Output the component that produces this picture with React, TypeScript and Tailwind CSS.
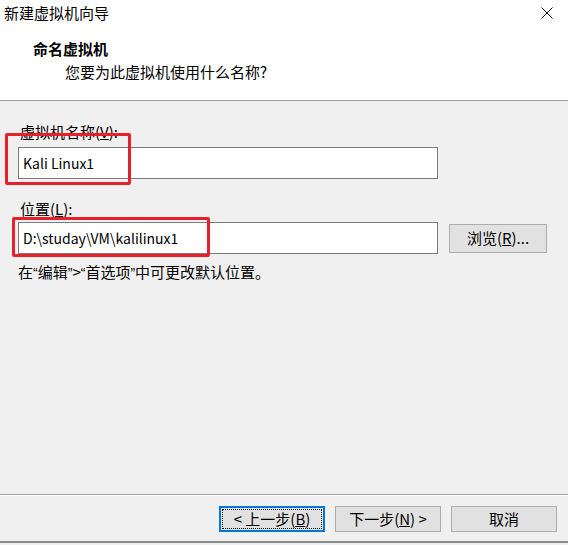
import React from 'react';

const font = { fontFamily: '"Noto Sans CJK SC", "Noto Sans", sans-serif' };

const WizardButton: React.FC<{ children: React.ReactNode; focused?: boolean }> = ({ children, focused }) => {
  if (focused) {
    return (
      <div className="w-[106px] h-[26px] border-2 border-[#0078d7] bg-[#e1e1e1] p-[1px]">
        <div className="w-full h-full border border-dotted border-black flex items-center justify-center text-[15px] leading-[20px] text-black">
          {children}
        </div>
      </div>
    );
  }
  return (
    <div className="w-[106px] h-[26px] border border-[#adadad] bg-[#e1e1e1] flex items-center justify-center text-[15px] leading-[20px] text-black">
      {children}
    </div>
  );
};

// narrow western quotes, as in the original dialog
const Q: React.FC<{ c: string }> = ({ c }) => (
  <span className="font-['Liberation_Sans',sans-serif] text-[14px]">{c}</span>
);

export default function App() {
  return (
    <div className="relative w-[568px] h-[545px] bg-[#f0f0f0] flex flex-col overflow-hidden text-black" style={font}>
      {/* Header */}
      <div className="h-[101px] bg-white border-b border-[#a0a0a0] shrink-0">
        <div className="flex justify-between items-start pt-[3px] pl-[4px] pr-[15px]">
          <span className="text-[15px] leading-[20px]">新建虚拟机向导</span>
          <svg width="12" height="12" viewBox="0 0 12 12" className="mt-[4px]">
            <path d="M0.5 0.5 L11.5 11.5 M11.5 0.5 L0.5 11.5" stroke="#000" strokeWidth="1" fill="none" />
          </svg>
        </div>
        <div className="pl-[33px] mt-[16px] text-[15px] leading-[20px] font-bold">命名虚拟机</div>
        <div className="pl-[65px] mt-[3px] text-[15px] leading-[20px]">您要为此虚拟机使用什么名称?</div>
      </div>

      {/* Body */}
      <div className="flex-1 pl-[18px]">
        <div className="mt-[21px] pl-[2px] text-[15px] leading-[20px]">
          虚拟机名称(<u>V</u>):
        </div>
        <div className="mt-[5px] w-[420px] h-[32px] bg-white border border-[#7a7a7a] flex items-center pl-[4px] text-[14px]">
          Kali Linux1
        </div>
        <div className="mt-[20px] pl-[2px] text-[15px] leading-[20px]">
          位置(<u>L</u>):
        </div>
        <div className="mt-[3px] flex items-center">
          <div className="w-[420px] h-[32px] bg-white border border-[#7a7a7a] flex items-center pl-[4px] text-[14px]">
            D:\studay\VM\kalilinux1
          </div>
          <div className="ml-[11px] w-[98px] h-[29px] border border-[#adadad] bg-[#e1e1e1] flex items-center justify-center text-[15px] leading-[20px]">
            浏览(<u>R</u>)...
          </div>
        </div>
        <div className="mt-[8px] text-[15px] leading-[20px]">
          在<Q c="“" />编辑<Q c="”" />&gt;<Q c="“" />首选项<Q c="”" />中可更改默认位置。
        </div>
      </div>

      {/* Footer */}
      <div className="h-[51px] shrink-0 border-t border-[#a0a0a0] flex flex-col">
        <div className="h-[11px] border-t border-white" />
        <div className="flex justify-end gap-[10px] pr-[11px]">
          <WizardButton focused>
            &lt; 上一步(<u>B</u>)
          </WizardButton>
          <WizardButton>
            下一步(<u>N</u>) &gt;
          </WizardButton>
          <WizardButton>取消</WizardButton>
        </div>
        <div className="h-[9px]" />
        <div className="h-[2px] bg-[#8a8a8a]" />
      </div>

      {/* Red annotation boxes */}
      <div className="absolute left-[5px] top-[133px] w-[126px] h-[52px] border-[3px] border-[#e8202c] rounded-[2px]" />
      <div className="absolute left-[12px] top-[217px] w-[198px] h-[40px] border-[3px] border-[#e8202c] rounded-[2px]" />
    </div>
  );
}
